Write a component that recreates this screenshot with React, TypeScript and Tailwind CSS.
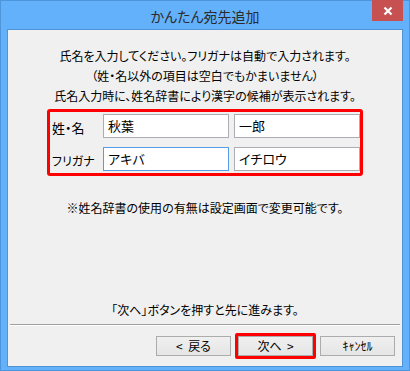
import React from 'react';

const jp = "font-['Noto_Sans_CJK_JP','Noto_Sans',sans-serif] [font-feature-settings:'palt']";

const Field: React.FC<{ value: string; focused?: boolean }> = ({ value, focused }) => (
  <div
    className={
      'w-[126px] h-[24px] bg-white border flex items-center px-[4px] text-[13px] text-black ' +
      (focused ? 'border-[#569de5]' : 'border-[#abadb3]')
    }
  >
    {value}
  </div>
);

const Btn: React.FC<{ label: string }> = ({ label }) => (
  <button className="w-[75px] h-[20px] border border-[#acacac] bg-gradient-to-b from-[#f0f0f0] to-[#e5e5e5] flex items-center justify-center text-black leading-none text-[12px] whitespace-pre">
    {label}
  </button>
);

export default function App() {
  return (
    <div className={'w-[410px] h-[371px] bg-[#63b1fa] border border-[#4d96dc] flex flex-col ' + jp}>
      {/* Title bar */}
      <div className="h-[28px] relative flex items-center justify-center">
        <span className="text-[14px] text-[#2b2b2b] pt-[2px]">かんたん宛先追加</span>
        <div className="absolute right-[6px] top-[-1px] w-[31px] h-[21px] bg-[#c75050] flex items-center justify-center">
          <svg width="10" height="10" viewBox="0 0 10 10">
            <path d="M1.5 1.5 L8.5 8.5 M8.5 1.5 L1.5 8.5" stroke="white" strokeWidth="2.2" />
          </svg>
        </div>
      </div>

      {/* Client area */}
      <div className="mx-[6px] h-[338px] bg-[#f0f0f0] border border-[#4f94d6] flex flex-col text-[12px] text-black">
        <div className="pt-[16px] flex flex-col items-center leading-[20px]">
          <p>氏名を入力してください。フリガナは自動で入力されます。</p>
          <p>（姓・名以外の項目は空白でもかまいません）</p>
          <p>氏名入力時に、姓名辞書により漢字の候補が表示されます。</p>
        </div>

        <div className="mt-[3px] ml-[39px] w-[316px] h-[67px] border-[3px] border-[#ff0000] rounded-[3px] pt-[2px] pl-[2px] flex flex-col gap-[9px]">
          <div className="flex items-center">
            <span className="w-[52px] text-[13px] pt-[3px]">姓・名</span>
            <div className="flex gap-[5px]">
              <Field value="秋葉" />
              <Field value="一郎" />
            </div>
          </div>
          <div className="flex items-center">
            <span className="w-[52px] text-[12px] pt-[4px]">フリガナ</span>
            <div className="flex gap-[5px]">
              <Field value="アキバ" focused />
              <Field value="イチロウ" />
            </div>
          </div>
        </div>

        <p className="mt-[22px] text-center leading-[20px]">※姓名辞書の使用の有無は設定画面で変更可能です。</p>

        <p className="mt-[82px] text-center leading-[20px]">「次へ」ボタンを押すと先に進みます。</p>

        <div className="mt-[4px] mx-[2px] h-[2px] border-t border-[#a0a0a0] border-b border-b-white" />

        <div className="mt-[7px] flex items-center justify-end pr-[7px] gap-[4px]">
          <Btn label="<  戻る" />
          <div className="border-[3px] border-[#ff0000] rounded-[2px]">
            <Btn label="次へ  >" />
          </div>
          <Btn label="ｷｬﾝｾﾙ" />
        </div>
      </div>
    </div>
  );
}
